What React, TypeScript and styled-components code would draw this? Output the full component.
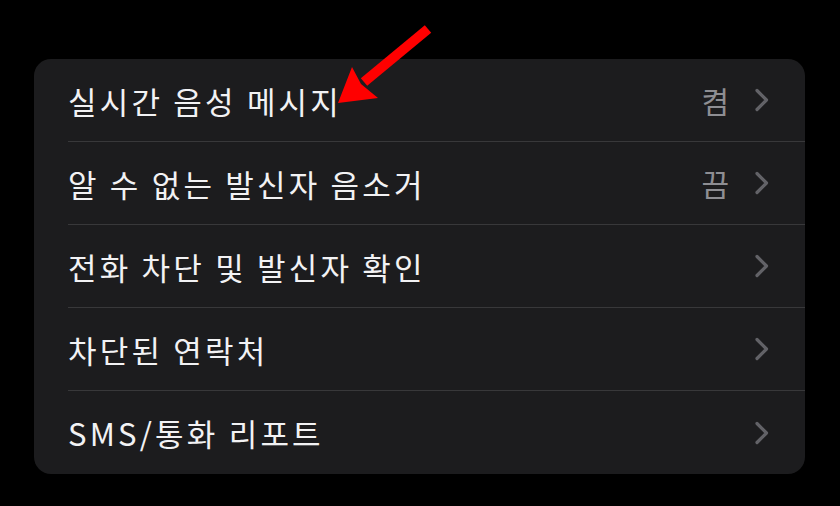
import React from "react";
import styled, { createGlobalStyle } from "styled-components";

const Global = createGlobalStyle`
  html, body { margin: 0; padding: 0; background: #000; }
  body { width: 840px; height: 506px; overflow: hidden; }
`;

const Page = styled.div`
  position: relative;
  width: 840px;
  height: 506px;
  box-sizing: border-box;
  padding: 59px 35px 0 34px;
  background: #000;
  font-family: "Noto Sans CJK KR", "Noto Sans", sans-serif;
`;

const Card = styled.div`
  background: #1c1c1e;
  border-radius: 17px;
  display: flex;
  flex-direction: column;
  overflow: hidden;
`;

const Row = styled.div`
  height: 83px;
  display: flex;
  align-items: center;
  padding-left: 34px;
`;

const RowInner = styled.div<{ $last?: boolean }>`
  flex: 1;
  height: 100%;
  display: flex;
  align-items: center;
  padding-right: 35px;
  border-bottom: ${(p) => (p.$last ? "none" : "1.5px solid #38383a")};
  box-sizing: border-box;
`;

const Label = styled.span`
  flex: 1;
  color: #f2f2f4;
  font-size: 31px;
  letter-spacing: 3.2px;
  font-weight: 400;
`;

const Value = styled.span`
  color: #8e8e93;
  font-size: 30px;
  margin-right: 25px;
`;

const Chevron = styled.svg`
  width: 16px;
  height: 26px;
  display: block;
`;

const Arrow = styled.svg`
  position: absolute;
  left: 330px;
  top: 20px;
  width: 110px;
  height: 90px;
`;

const rows: { label: string; value?: string }[] = [
  { label: "실시간 음성 메시지", value: "켬" },
  { label: "알 수 없는 발신자 음소거", value: "끔" },
  { label: "전화 차단 및 발신자 확인" },
  { label: "차단된 연락처" },
  { label: "SMS/통화 리포트" },
];

export default function App() {
  return (
    <Page>
      <Global />
      <Card>
        {rows.map((r, i) => (
          <Row key={r.label}>
            <RowInner $last={i === rows.length - 1}>
              <Label>{r.label}</Label>
              {r.value && <Value>{r.value}</Value>}
              <Chevron viewBox="0 0 16 26">
                <path
                  d="M3 3.5 L12.5 13 L3 22.5"
                  fill="none"
                  stroke="#626267"
                  strokeWidth="3.2"
                  strokeLinecap="round"
                  strokeLinejoin="round"
                />
              </Chevron>
            </RowInner>
          </Row>
        ))}
      </Card>
      <Arrow viewBox="0 0 110 90">
        <line x1="98" y1="9" x2="34" y2="62" stroke="#f00" strokeWidth="10" />
        <polygon points="8,83 22,47 31,64 48,78" fill="#f00" />
      </Arrow>
    </Page>
  );
}
